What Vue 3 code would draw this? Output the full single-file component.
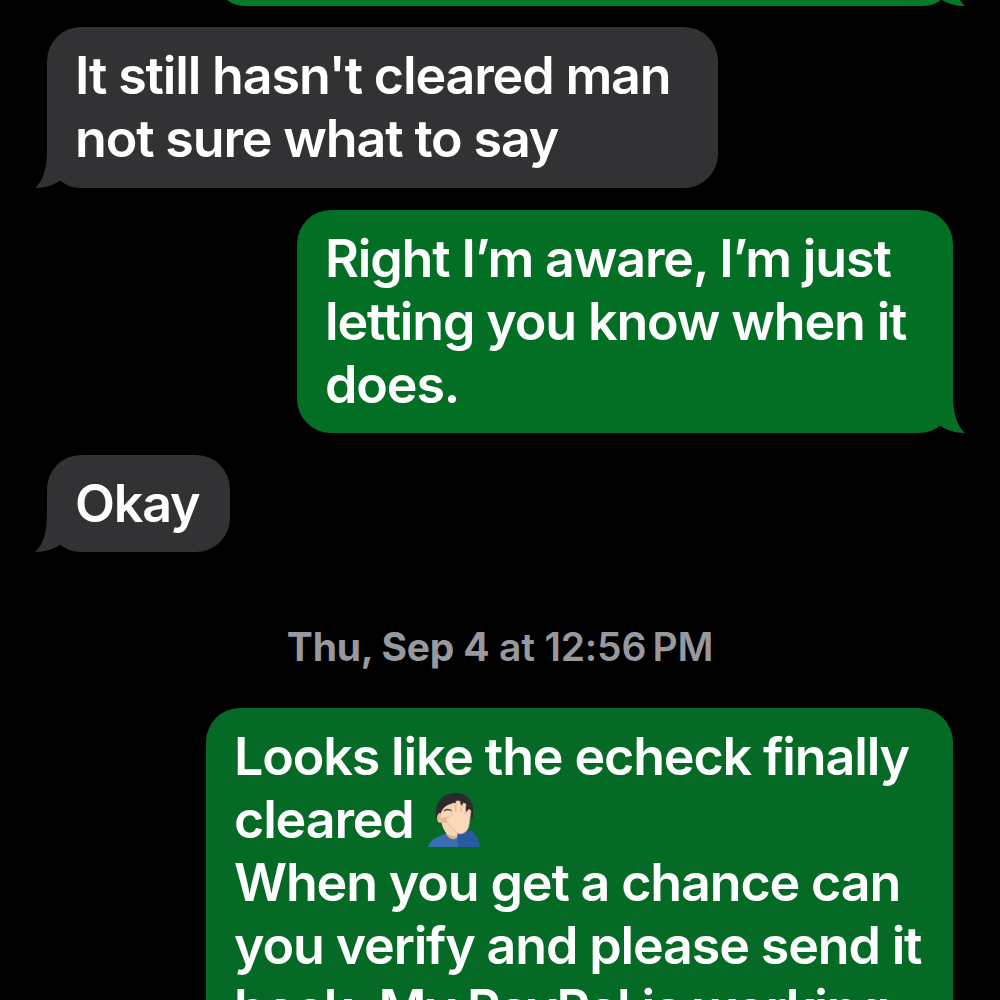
<template>
  <div class="thread">
    <div class="row out">
      <div class="bubble out-bubble top-bubble">
        <svg class="tail tail-right" viewBox="0 0 61 38"><path d="M48 0C48 18 52 31 60 38C50 38 40 35 33 29C27 34 17 38 5 38L0 0Z" /></svg>
      </div>
    </div>

    <div class="row in">
      <div class="bubble in-bubble cleared-bubble">
        <p>It still hasn't cleared man<br />not sure what to say</p>
        <svg class="tail tail-left" viewBox="0 0 61 38"><path d="M48 0C48 18 52 31 60 38C50 38 40 35 33 29C27 34 17 38 5 38L0 0Z" /></svg>
      </div>
    </div>

    <div class="row out">
      <div class="bubble out-bubble mid-bubble">
        <p>Right I’m aware, I’m just<br />letting you know when it<br />does.</p>
        <svg class="tail tail-right" viewBox="0 0 61 38"><path d="M48 0C48 18 52 31 60 38C50 38 40 35 33 29C27 34 17 38 5 38L0 0Z" /></svg>
      </div>
    </div>

    <div class="row in">
      <div class="bubble in-bubble okay-bubble">
        <p>Okay</p>
        <svg class="tail tail-left" viewBox="0 0 61 38"><path d="M48 0C48 18 52 31 60 38C50 38 40 35 33 29C27 34 17 38 5 38L0 0Z" /></svg>
      </div>
    </div>

    <div class="stamp"><b>Thu, Sep 4</b> at 12:56&#8201;PM</div>

    <div class="row out">
      <div class="bubble out-bubble last-bubble">
        <p>
          Looks like the echeck finally<br />
          cleared
          <svg class="emoji" viewBox="0 0 54 54">
            <path d="M1 54C3 47 10 43 19 41L31 45V54Z" fill="#3a6fb4" />
            <path d="M19 34H31V44C27 48 22 46 19 41Z" fill="#dfb08c" />
            <path d="M9 24C7 9 16 0 28 0C40 0 48 8 46 24L41 27H13Z" fill="#2b2b2e" />
            <ellipse cx="13" cy="25" rx="3" ry="5" fill="#e8bd9a" />
            <path d="M14 20C16 13 22 11 28 10C34 10 39 14 40 22C41 33 35 43 26 43C18 43 13 32 14 20Z" fill="#f6d5b8" />
            <path d="M17 18C19 16 22 16 25 18" fill="none" stroke="#57402f" stroke-width="1.5" />
            <ellipse cx="18" cy="27" rx="4" ry="3" fill="#eeb396" />
            <path d="M31 39C35 38 39 38 43 37C49 41 52 47 53 54H31C30 48 30 44 31 39Z" fill="#2a5a9e" />
            <path d="M19 26C21 24 24 25 25 22L24 11L27 10L29 19L29 8L33 8L34 19L36 10L39 11L38 21L42 16L44 18L42 32C41 37 39 40 33 41C27 39 22 33 19 26Z" fill="#fad8ba" stroke="#dfae8a" stroke-width=".6" />
          </svg><br />
          When you get a chance can<br />
          you verify and please send it<br />
          back. My PayPal is working
        </p>
      </div>
    </div>
  </div>
</template>

<script setup>
</script>

<style>
html, body {
  background: #000;
}
</style>

<style scoped>
.thread {
  height: 1000px;
  overflow: hidden;
  background: #000;
  display: flex;
  flex-direction: column;
  gap: 22px;
  padding: 0 47px;
  box-sizing: border-box;
  font-family: Inter, "Liberation Sans", sans-serif;
}

.row {
  display: flex;
  flex-shrink: 0;
}

.row.out { justify-content: flex-end; }
.row.in { justify-content: flex-start; }

.bubble {
  position: relative;
  box-sizing: border-box;
  border-radius: 34px;
  padding: 17px 0 17px 28px;
  color: #fff;
  font-size: 52px;
  font-weight: 600;
  line-height: 63px;
  letter-spacing: -1.15px;
  white-space: nowrap;
}

.bubble p {
  position: relative;
  z-index: 1;
  margin: 0;
}

.in-bubble { background: #323234; }
.in-bubble .tail { fill: #323234; }

.cleared-bubble { width: 671px; height: 161px; }
.okay-bubble { width: 183px; }

.top-bubble {
  width: 738px;
  height: 60px;
  margin-top: -54px;
  margin-bottom: -1px;
  background: #027a27;
}
.top-bubble .tail { fill: #027a27; }

.mid-bubble { width: 656px; background: #036f25; }
.mid-bubble .tail { fill: #036f25; }

.last-bubble { width: 747px; background: #046a25; }

.tail {
  position: absolute;
  bottom: 0;
  width: 61px;
  height: 38px;
}

.tail-right { right: -13px; }
.tail-left { left: -13px; transform: scaleX(-1); }

.stamp {
  margin-top: 48px;
  margin-bottom: 14px;
  text-align: center;
  color: #98989f;
  font-size: 39px;
  font-weight: 600;
  line-height: 50px;
  letter-spacing: -0.2px;
}

.stamp b { font-weight: 700; }

.emoji {
  width: 54px;
  height: 54px;
  vertical-align: -9px;
  margin-left: 1px;
}
</style>
